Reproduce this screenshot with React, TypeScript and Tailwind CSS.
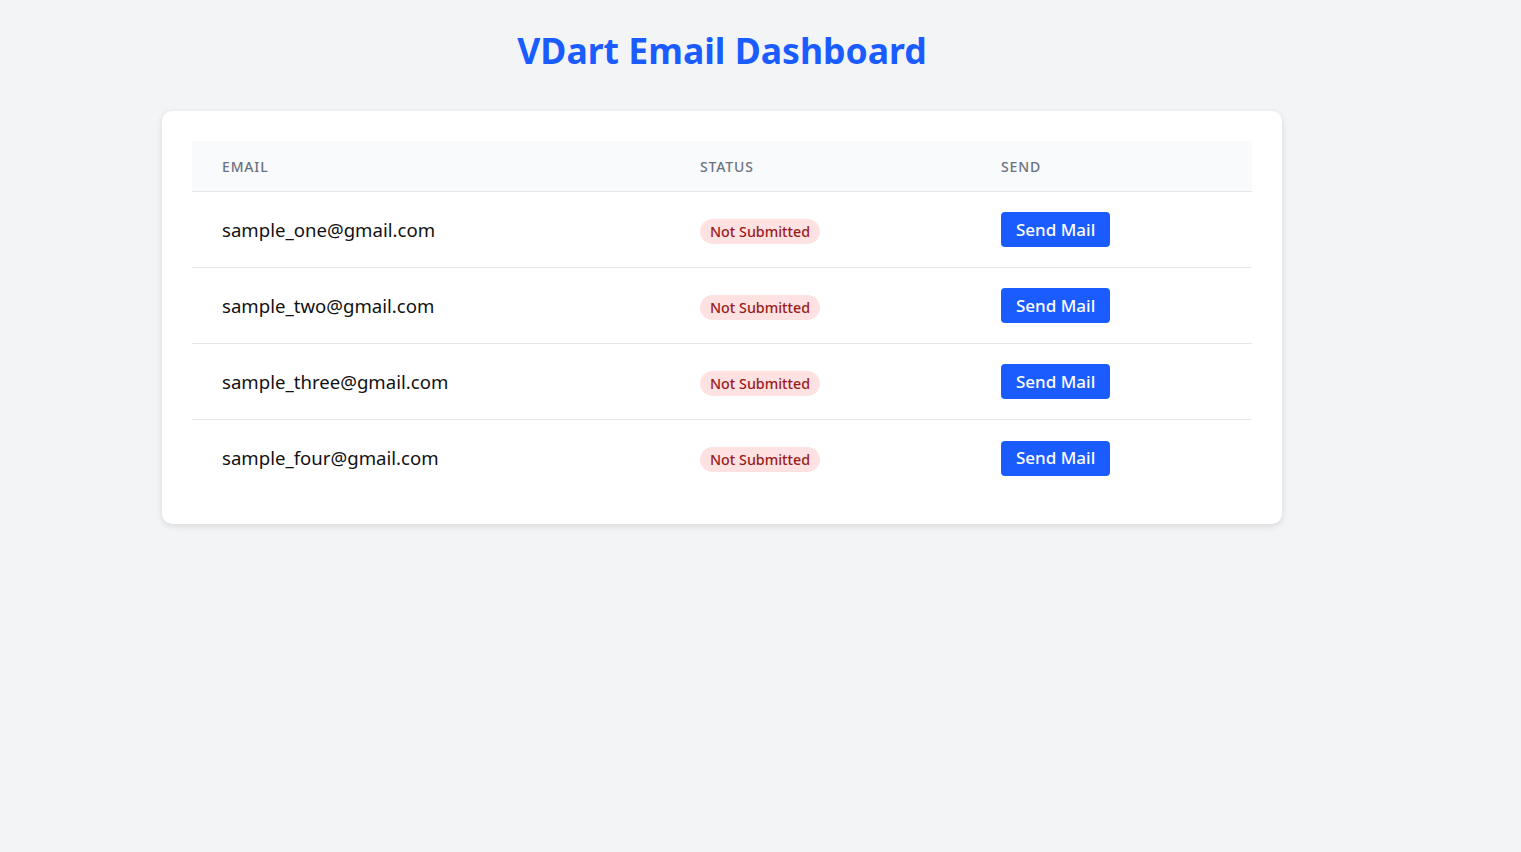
const rows = [
  "sample_one@gmail.com",
  "sample_two@gmail.com",
  "sample_three@gmail.com",
  "sample_four@gmail.com",
];

export default function App() {
  return (
    <div
      className="min-h-screen bg-[#f3f4f6] text-[#111827]"
      style={{ fontFamily: '"Noto Sans", "Open Sans", sans-serif' }}
    >
      <div className="w-[1444px] flex flex-col items-center pt-[26px]">
        <h1 className="text-[35.6px] leading-[48px] font-bold text-[#1a5cff]">
          VDart Email Dashboard
        </h1>
        <div className="mt-[37px] w-[1120px] bg-white rounded-[10px] shadow-[0_2px_6px_rgba(0,0,0,0.12)] px-[30px] pt-[30px] pb-[28px]">
          <div className="grid grid-cols-[478px_301px_1fr] bg-[#f9fafb] border-b border-[#e5e7eb] h-[51px] items-center text-[14px] font-medium tracking-[0.06em] uppercase text-[#6b7280]">
            <div className="pl-[30px]">Email</div>
            <div className="pl-[30px]">Status</div>
            <div className="pl-[30px]">Send</div>
          </div>
          {rows.map((email, i) => (
            <div
              key={email}
              className={`grid grid-cols-[478px_301px_1fr] h-[76px] items-center ${
                i < rows.length - 1 ? "border-b border-[#e5e7eb]" : ""
              }`}
            >
              <div className="pl-[30px] text-[18.6px] text-[#111]">{email}</div>
              <div className="pl-[30px] pt-[3px]">
                <span className="inline-block rounded-full bg-[#fee2e2] text-[#991b1b] text-[14.3px] font-medium leading-[25px] px-[10px]">
                  Not Submitted
                </span>
              </div>
              <div className="pl-[30px]">
                <button className="bg-[#1a5cff] text-white text-[17px] font-medium rounded-[4px] h-[35px] px-[15px]">
                  Send Mail
                </button>
              </div>
            </div>
          ))}
        </div>
      </div>
    </div>
  );
}
